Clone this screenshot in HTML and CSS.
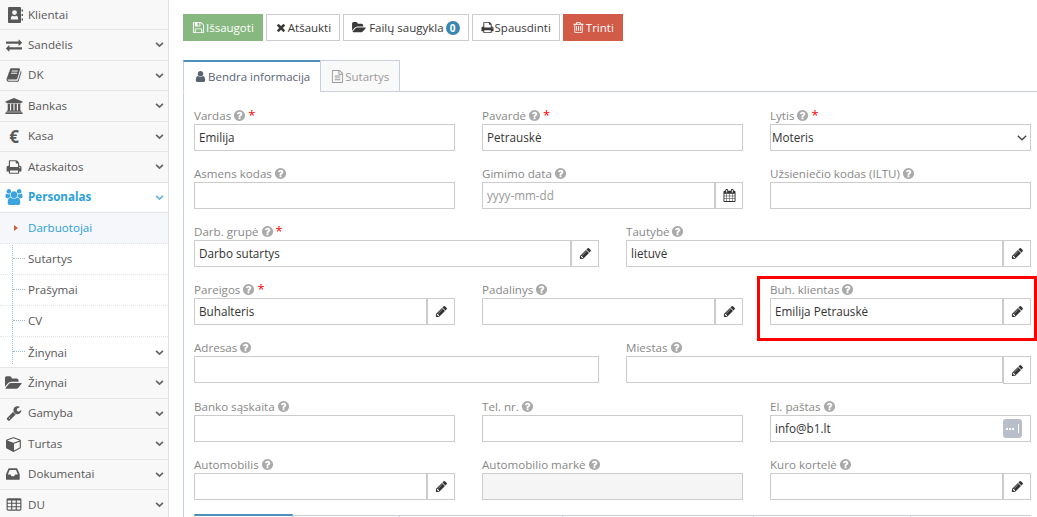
FILE: index.html
```html
<!DOCTYPE html>
<html lang="lt">
<head>
<meta charset="utf-8">
<title>Darbuotojai</title>
<link rel="stylesheet" href="styles.css">
</head>
<body>
<svg class="sprite" xmlns="http://www.w3.org/2000/svg">
<symbol id="i-pencil" viewBox="0 0 1792 1792"><path d="M491 1536l91-91-235-235-91 91v107h128v128h107zm523-928q0-22-22-22-10 0-17 7l-542 542q-7 7-7 17 0 22 22 22 10 0 17-7l542-542q7-7 7-17zm-54-192l416 416-832 832h-416v-416zm683 96q0 53-37 90l-166 166-416-416 166-165q36-38 90-38 53 0 91 38l235 234q37 39 37 91z"/></symbol>
<symbol id="i-times" viewBox="0 0 1792 1792"><path d="M1490 1322q0 40-28 68l-136 136q-28 28-68 28t-68-28l-294-294-294 294q-28 28-68 28t-68-28l-136-136q-28-28-28-68t28-68l294-294-294-294q-28-28-28-68t28-68l136-136q28-28 68-28t68 28l294 294 294-294q28-28 68-28t68 28l136 136q28 28 28 68t-28 68l-294 294 294 294q28 28 28 68z"/></symbol>
<symbol id="i-help" viewBox="0 0 1792 1792"><path d="M1024 1376v-192q0-14-9-23t-23-9h-192q-14 0-23 9t-9 23v192q0 14 9 23t23 9h192q14 0 23-9t9-23zm256-672q0-88-55.5-163t-138.5-116-170-41q-243 0-371 213-15 24 8 42l132 100q7 6 19 6 16 0 25-12 53-68 86-92 34-24 86-24 48 0 85.5 26t37.5 59q0 38-20 61t-68 45q-63 28-115.5 86.5t-52.5 125.5v36q0 14 9 23t23 9h192q14 0 23-9t9-23q0-19 21.5-49.5t54.5-49.5q32-18 49-28.5t46-35 44.5-48 28-60.5 12.5-81zm384 192q0 209-103 385.5t-279.5 279.5-385.5 103-385.5-103-279.5-279.5-103-385.5 103-385.5 279.5-279.5 385.5-103 385.5 103 279.5 279.5 103 385.5z"/></symbol>
<symbol id="i-user" viewBox="0 0 1792 1792"><path d="M1536 1399q0 109-62.5 187t-150.5 78h-854q-88 0-150.5-78t-62.5-187q0-85 8.5-160.5t31.5-152 58.5-131 94-89 134.5-34.5q131 128 313 128t313-128q76 0 134.5 34.5t94 89 58.5 131 31.5 152 8.5 160.5zm-256-887q0 159-112.5 271.5t-271.5 112.5-271.5-112.5-112.5-271.5 112.5-271.5 271.5-112.5 271.5 112.5 112.5 271.5z"/></symbol>
<symbol id="i-print" viewBox="0 0 1792 1792"><path d="M448 1536h896v-256h-896v256zm0-640h896v-384h-160q-40 0-68-28t-28-68v-160h-640v640zm1152 64q0-26-19-45t-45-19-45 19-19 45 19 45 45 19 45-19 19-45zm128 0v416q0 13-9.5 22.5t-22.5 9.5h-224v160q0 40-28 68t-68 28h-960q-40 0-68-28t-28-68v-160h-224q-13 0-22.5-9.5t-9.5-22.5v-416q0-79 56.5-135.5t135.5-56.5h64v-544q0-40 28-68t68-28h672q40 0 88 20t76 48l152 152q28 28 48 76t20 88v256h64q79 0 135.5 56.5t56.5 135.5z"/></symbol>
<symbol id="i-folder" viewBox="0 0 1920 1792"><path d="M1815 952q0 31-31 66l-336 396q-43 51-120.5 86.5t-143.5 35.5h-1088q-34 0-60.5-13t-26.5-43q0-31 31-66l336-396q43-51 120.5-86.5t143.5-35.5h1088q34 0 60.5 13t26.5 43zm-343-344v160h-832q-94 0-197 47.5t-164 119.5l-337 396-5 6q0-4-.5-12.5t-.5-12.5v-960q0-92 66-158t158-66h320q92 0 158 66t66 158v32h544q92 0 158 66t66 158z"/></symbol>
<symbol id="i-wrench" viewBox="0 0 1792 1792"><path d="M448 1472q0-26-19-45t-45-19-45 19-19 45 19 45 45 19 45-19 19-45zm644-420l-682 682q-37 37-90 37-52 0-91-37l-106-108q-38-36-38-90 0-53 38-91l681-681q39 98 114.5 173.5t173.5 114.5zm634-435q0 39-23 106-47 134-164.5 217.5t-258.5 83.5q-185 0-316.5-131.5t-131.5-316.5 131.5-316.5 316.5-131.5q58 0 121.5 16.5t107.5 46.5q16 11 16 28t-16 28l-293 169v224l193 107q5-3 79-48.5t135.5-81 70.5-35.5q15 0 23.5 10t8.5 25z"/></symbol>
<symbol id="i-exchange" viewBox="0 0 1792 1792"><path d="M1792 1184v192q0 13-9.5 22.5t-22.5 9.5h-1376v192q0 13-9.5 22.5t-22.5 9.5q-12 0-24-10l-319-320q-9-9-9-22 0-14 9-23l320-320q9-9 23-9 13 0 22.5 9.5t9.5 22.5v192h1376q13 0 22.5 9.5t9.5 22.5zm0-544q0 14-9 23l-320 320q-9 9-23 9-13 0-22.5-9.5t-9.5-22.5v-192h-1376q-13 0-22.5-9.5t-9.5-22.5v-192q0-13 9.5-22.5t22.5-9.5h1376v-192q0-14 9-23t23-9q12 0 24 10l319 319q9 9 9 23z"/></symbol>
<symbol id="i-table" viewBox="0 0 1792 1792"><path d="M576 1376v-192q0-14-9-23t-23-9h-320q-14 0-23 9t-9 23v192q0 14 9 23t23 9h320q14 0 23-9t9-23zm0-384v-192q0-14-9-23t-23-9h-320q-14 0-23 9t-9 23v192q0 14 9 23t23 9h320q14 0 23-9t9-23zm512 384v-192q0-14-9-23t-23-9h-320q-14 0-23 9t-9 23v192q0 14 9 23t23 9h320q14 0 23-9t9-23zm-512-768v-192q0-14-9-23t-23-9h-320q-14 0-23 9t-9 23v192q0 14 9 23t23 9h320q14 0 23-9t9-23zm512 384v-192q0-14-9-23t-23-9h-320q-14 0-23 9t-9 23v192q0 14 9 23t23 9h320q14 0 23-9t9-23zm512 384v-192q0-14-9-23t-23-9h-320q-14 0-23 9t-9 23v192q0 14 9 23t23 9h320q14 0 23-9t9-23zm-512-768v-192q0-14-9-23t-23-9h-320q-14 0-23 9t-9 23v192q0 14 9 23t23 9h320q14 0 23-9t9-23zm512 384v-192q0-14-9-23t-23-9h-320q-14 0-23 9t-9 23v192q0 14 9 23t23 9h320q14 0 23-9t9-23zm0-384v-192q0-14-9-23t-23-9h-320q-14 0-23 9t-9 23v192q0 14 9 23t23 9h320q14 0 23-9t9-23zm128-320v1088q0 66-47 113t-113 47h-1344q-66 0-113-47t-47-113v-1088q0-66 47-113t113-47h1344q66 0 113 47t47 113z"/></symbol>
<symbol id="i-users" viewBox="0 0 1920 1792"><path d="M593 896q-162 5-265 128h-134q-82 0-138-40.5t-56-118.5q0-353 124-353 6 0 43.5 21t97.5 42.5 119 21.5q67 0 133-23-5 37-5 66 0 139 81 256zm1071 637q0 120-73 189.5t-194 69.5h-874q-121 0-194-69.5t-73-189.5q0-53 3.5-103.5t14-109 26.5-108.5 43-97.5 62-81 85.5-53.5 111.5-20q10 0 43 21.5t73 48 107 48 135 21.5 135-21.5 107-48 73-48 43-21.5q61 0 111.5 20t85.5 53.5 62 81 43 97.5 26.5 108.5 14 109 3.5 103.5zm-1024-1277q0 106-75 181t-181 75-181-75-75-181 75-181 181-75 181 75 75 181zm704 384q0 159-112.5 271.5t-271.5 112.5-271.5-112.5-112.5-271.5 112.5-271.5 271.5-112.5 271.5 112.5 112.5 271.5zm576 225q0 78-56 118.5t-138 40.5h-134q-103-123-265-128 81-117 81-256 0-29-5-66 66 23 133 23 59 0 119-21.5t97.5-42.5 43.5-21q124 0 124 353zm-128-609q0 106-75 181t-181 75-181-75-75-181 75-181 181-75 181 75 75 181z"/></symbol>
<symbol id="i-cube" viewBox="0 0 1792 1792"><path d="M896 1629l640-349v-636l-640 233v752zm-64-864l698-254-698-254-698 254zm832-252v768q0 35-18 65t-49 47l-704 384q-28 16-61 16t-61-16l-704-384q-31-17-49-47t-18-65v-768q0-40 23-73t61-47l704-256q22-8 44-8t44 8l704 256q38 14 61 47t23 73z"/></symbol>
<symbol id="i-bank" viewBox="0 0 1920 1792"><path d="M960 0l960 384v128h-128q0 26-20.5 45t-48.5 19h-1526q-28 0-48.5-19t-20.5-45h-128v-128zm-704 640h256v768h128v-768h256v768h128v-768h256v768h128v-768h256v768h59q28 0 48.5 19t20.5 45v64h-1664v-64q0-26 20.5-45t48.5-19h59v-768zm1595 960q28 0 48.5 19t20.5 45v128h-1920v-128q0-26 20.5-45t48.5-19h1782z"/></symbol>
<symbol id="i-inbox" viewBox="0 0 1792 1792"><path d="M1023 960h316q-1-3-2.5-8.5t-2.5-7.5l-212-496h-708l-212 496q-1 3-2.5 8.5t-2.5 7.5h316l95 192h320zm513 30v482q0 26-19 45t-45 19h-1408q-26 0-45-19t-19-45v-482q0-62 25-123l238-552q10-25 36.5-42t52.5-17h832q26 0 52.5 17t36.5 42l238 552q25 61 25 123z"/></symbol>
<symbol id="i-book" viewBox="0 0 1792 1792"><path d="M1703 478q40 57 18 129l-275 906q-19 64-76.5 107.5t-122.5 43.5h-923q-77 0-148.5-53.5t-99.5-131.5q-24-67-2-127 0-4 3-27t4-37q1-8-3-21.5t-3-19.5q2-11 8-21t16.5-23.5 16.5-23.5q23-38 45-91.5t30-91.5q3-10 .5-30t-.5-28q3-11 17-28t17-23q21-36 42-92t25-90q1-9-2.5-32t.5-28q4-13 22-30.5t22-22.5q19-26 42.5-84.5t27.5-96.5q1-8-3-25.5t-2-26.5q2-8 9-18t18-23 17-21q8-12 16.5-30.5t15-35 16-36 19.5-32 26.5-23.5 36-11.5 47.5 5.5l-1 3q38-9 51-9h761q74 0 114 56t18 130l-274 906q-36 119-71.5 153.5t-128.5 34.5h-869q-27 0-38 15-11 16-1 43 24 70 144 70h923q29 0 56-15.5t35-41.5l300-987q7-22 5-57 38 15 59 43zm-1064 2q-4 13 2 22.5t20 9.5h608q13 0 25.5-9.5t16.5-22.5l21-64q4-13-2-22.5t-20-9.5h-608q-13 0-25.5 9.5t-16.5 22.5zm-83 256q-4 13 2 22.5t20 9.5h608q13 0 25.5-9.5t16.5-22.5l21-64q4-13-2-22.5t-20-9.5h-608q-13 0-25.5 9.5t-16.5 22.5z"/></symbol>
<symbol id="i-calendar" viewBox="0 0 1792 1792"><path d="M192 1664h288v-288h-288v288zm352 0h320v-288h-320v288zm-352-352h288v-320h-288v320zm352 0h320v-320h-320v320zm-352-384h288v-288h-288v288zm736 736h320v-288h-320v288zm-384-736h320v-288h-320v288zm768 736h288v-288h-288v288zm-384-352h320v-320h-320v320zm-352-864v-288q0-13-9.5-22.5t-22.5-9.5h-64q-13 0-22.5 9.5t-9.5 22.5v288q0 13 9.5 22.5t22.5 9.5h64q13 0 22.5-9.5t9.5-22.5zm736 864h288v-320h-288v320zm-384-384h320v-288h-320v288zm384 0h288v-288h-288v288zm32-480v-288q0-13-9.5-22.5t-22.5-9.5h-64q-13 0-22.5 9.5t-9.5 22.5v288q0 13 9.5 22.5t22.5 9.5h64q13 0 22.5-9.5t9.5-22.5zm384-64v1280q0 52-38 90t-90 38h-1408q-52 0-90-38t-38-90v-1280q0-52 38-90t90-38h128v-96q0-66 47-113t113-47h64q66 0 113 47t47 113v96h384v-96q0-66 47-113t113-47h64q66 0 113 47t47 113v96h128q52 0 90 38t38 90z"/></symbol>
<symbol id="i-save" viewBox="0 0 1792 1792"><path d="M512 1536h768v-384h-768v384zm896 0h128v-896q0-14-10-38.5t-20-34.5l-281-281q-10-10-34-20t-39-10v416q0 40-28 68t-68 28h-576q-40 0-68-28t-28-68v-416h-128v1280h128v-416q0-40 28-68t68-28h832q40 0 68 28t28 68v416zm-384-928v-320q0-13-9.5-22.5t-22.5-9.5h-192q-13 0-22.5 9.5t-9.5 22.5v320q0 13 9.5 22.5t22.5 9.5h192q13 0 22.5-9.5t9.5-22.5zm640 32v928q0 40-28 68t-68 28h-1344q-40 0-68-28t-28-68v-1344q0-40 28-68t68-28h928q40 0 88 20t76 48l280 280q28 28 48 76t20 88z"/></symbol>
<symbol id="i-trash" viewBox="0 0 1792 1792"><path d="M704 736v576q0 14-9 23t-23 9h-64q-14 0-23-9t-9-23v-576q0-14 9-23t23-9h64q14 0 23 9t9 23zm256 0v576q0 14-9 23t-23 9h-64q-14 0-23-9t-9-23v-576q0-14 9-23t23-9h64q14 0 23 9t9 23zm256 0v576q0 14-9 23t-23 9h-64q-14 0-23-9t-9-23v-576q0-14 9-23t23-9h64q14 0 23 9t9 23zm128 724v-948h-896v948q0 22 7 40.5t14.5 27 10.5 8.5h832q3 0 10.5-8.5t14.5-27 7-40.5zm-672-1076h448l-48-117q-7-9-17-11h-317q-10 2-17 11zm928 32v64q0 14-9 23t-23 9h-96v948q0 83-47 143.5t-113 60.5h-832q-66 0-113-58.5t-47-141.5v-952h-96q-14 0-23-9t-9-23v-64q0-14 9-23t23-9h309l70-167q15-37 54-63t79-26h320q40 0 79 26t54 63l70 167h309q14 0 23 9t9 23z"/></symbol>
<symbol id="i-file" viewBox="0 0 1792 1792"><path d="M1596 380q28 28 48 76t20 88v1152q0 40-28 68t-68 28h-1344q-40 0-68-28t-28-68v-1600q0-40 28-68t68-28h896q40 0 88 20t76 48zm-444-244v376h376q-10-29-22-41l-313-313q-12-12-41-22zm384 1528v-1024h-416q-40 0-68-28t-28-68v-416h-768v1536h1280zm-1024-864q0-14 9-23t23-9h704q14 0 23 9t9 23v64q0 14-9 23t-23 9h-704q-14 0-23-9t-9-23v-64zm736 224q14 0 23 9t9 23v64q0 14-9 23t-23 9h-704q-14 0-23-9t-9-23v-64q0-14 9-23t23-9h704zm0 256q14 0 23 9t9 23v64q0 14-9 23t-23 9h-704q-14 0-23-9t-9-23v-64q0-14 9-23t23-9h704z"/></symbol>
<symbol id="i-contact" viewBox="0 0 16 16"><path fill-rule="evenodd" d="M2 0h11a1 1 0 0 1 1 1v14a1 1 0 0 1-1 1H2a1 1 0 0 1-1-1V1a1 1 0 0 1 1-1zm5.500 3.200a2.400 2.400 0 1 0 0 4.800 2.400 2.400 0 0 0 0-4.800zM3.800 12.600h7.400c0-2.400-.8-3.900-2-3.900-.5.4-1 .6-1.700.6s-1.200-.2-1.700-.6c-1.200 0-2 1.500-2 3.900z"/><path d="M14.600 2.500H16v2h-1.400zM14.600 7H16v2h-1.400zM14.600 11.500H16v2h-1.400z"/></symbol>
<symbol id="i-angle" viewBox="0 0 10 10"><path d="M1.200 3.100 5 6.700l3.800-3.600" fill="none" stroke="currentColor" stroke-width="2"/></symbol>
<symbol id="i-select" viewBox="0 0 10 6"><path d="M.8.800 5 4.800 9.200.8" fill="none" stroke="currentColor" stroke-width="1.300"/></symbol>
</svg>

<div class="layout">
<nav class="sidebar">
  <a class="nav-item nav-first"><span class="nav-ico"><svg class="ico-contact"><use href="#i-contact"/></svg></span><span class="nav-text">Klientai</span></a>
  <a class="nav-item"><span class="nav-ico"><svg class="ico-18"><use href="#i-exchange"/></svg></span><span class="nav-text">Sandėlis</span><svg class="caret"><use href="#i-angle"/></svg></a>
  <a class="nav-item"><span class="nav-ico"><svg class="ico-16"><use href="#i-book"/></svg></span><span class="nav-text">DK</span><svg class="caret"><use href="#i-angle"/></svg></a>
  <a class="nav-item"><span class="nav-ico"><svg class="ico-18"><use href="#i-bank"/></svg></span><span class="nav-text">Bankas</span><svg class="caret"><use href="#i-angle"/></svg></a>
  <a class="nav-item"><span class="nav-ico nav-euro">€</span><span class="nav-text">Kasa</span><svg class="caret"><use href="#i-angle"/></svg></a>
  <a class="nav-item"><span class="nav-ico"><svg class="ico-16"><use href="#i-print"/></svg></span><span class="nav-text">Ataskaitos</span><svg class="caret"><use href="#i-angle"/></svg></a>
  <a class="nav-item nav-open"><span class="nav-ico"><svg class="ico-18"><use href="#i-users"/></svg></span><span class="nav-text">Personalas</span><svg class="caret"><use href="#i-angle"/></svg></a>
  <div class="submenu">
    <a class="sub-item sub-active"><span class="nav-text">Darbuotojai</span></a>
    <a class="sub-item"><span class="nav-text">Sutartys</span></a>
    <a class="sub-item"><span class="nav-text">Prašymai</span></a>
    <a class="sub-item"><span class="nav-text">CV</span></a>
    <a class="sub-item sub-last"><span class="nav-text">Žinynai</span><svg class="caret"><use href="#i-angle"/></svg></a>
  </div>
  <a class="nav-item"><span class="nav-ico"><svg class="ico-18"><use href="#i-folder"/></svg></span><span class="nav-text">Žinynai</span><svg class="caret"><use href="#i-angle"/></svg></a>
  <a class="nav-item"><span class="nav-ico"><svg class="ico-16"><use href="#i-wrench"/></svg></span><span class="nav-text">Gamyba</span><svg class="caret"><use href="#i-angle"/></svg></a>
  <a class="nav-item"><span class="nav-ico"><svg class="ico-16"><use href="#i-cube"/></svg></span><span class="nav-text">Turtas</span><svg class="caret"><use href="#i-angle"/></svg></a>
  <a class="nav-item"><span class="nav-ico"><svg class="ico-16"><use href="#i-inbox"/></svg></span><span class="nav-text">Dokumentai</span><svg class="caret"><use href="#i-angle"/></svg></a>
  <a class="nav-item"><span class="nav-ico"><svg class="ico-16"><use href="#i-table"/></svg></span><span class="nav-text">DU</span><svg class="caret"><use href="#i-angle"/></svg></a>
</nav>

<main class="main">
  <div class="toolbar">
    <button class="btn btn-green"><svg class="btn-ico"><use href="#i-save"/></svg>Išsaugoti</button>
    <button class="btn"><svg class="btn-ico btn-ico-s"><use href="#i-times"/></svg>Atšaukti</button>
    <button class="btn"><svg class="btn-ico btn-ico-w"><use href="#i-folder"/></svg>Failų saugykla<span class="badge">0</span></button>
    <button class="btn"><svg class="btn-ico"><use href="#i-print"/></svg>Spausdinti</button>
    <button class="btn btn-red"><svg class="btn-ico"><use href="#i-trash"/></svg>Trinti</button>
  </div>

  <div class="tabs">
    <div class="tab tab-active"><svg class="tab-ico"><use href="#i-user"/></svg>Bendra informacija</div>
    <div class="tab"><svg class="tab-ico"><use href="#i-file"/></svg>Sutartys</div>
  </div>

  <div class="pane">
    <div class="form">
      <div class="field span-4">
        <label class="lbl">Vardas<svg class="help"><use href="#i-help"/></svg><span class="req">*</span></label>
        <div class="group"><input class="inp" value="Emilija"></div>
      </div>
      <div class="field span-4">
        <label class="lbl">Pavardė<svg class="help"><use href="#i-help"/></svg><span class="req">*</span></label>
        <div class="group"><input class="inp" value="Petrauskė"></div>
      </div>
      <div class="field span-4">
        <label class="lbl">Lytis<svg class="help"><use href="#i-help"/></svg><span class="req">*</span></label>
        <div class="group"><select class="inp inp-select"><option>Moteris</option></select><svg class="select-arrow"><use href="#i-select"/></svg></div>
      </div>

      <div class="field span-4">
        <label class="lbl">Asmens kodas<svg class="help"><use href="#i-help"/></svg></label>
        <div class="group"><input class="inp"></div>
      </div>
      <div class="field span-4">
        <label class="lbl">Gimimo data<svg class="help"><use href="#i-help"/></svg></label>
        <div class="group"><input class="inp" placeholder="yyyy-mm-dd"><span class="addon"><svg class="addon-ico"><use href="#i-calendar"/></svg></span></div>
      </div>
      <div class="field span-4">
        <label class="lbl">Užsieniečio kodas (ILTU)<svg class="help"><use href="#i-help"/></svg></label>
        <div class="group"><input class="inp"></div>
      </div>

      <div class="field span-6">
        <label class="lbl">Darb. grupė<svg class="help"><use href="#i-help"/></svg><span class="req">*</span></label>
        <div class="group"><input class="inp" value="Darbo sutartys"><span class="addon"><svg class="addon-ico"><use href="#i-pencil"/></svg></span></div>
      </div>
      <div class="field span-6">
        <label class="lbl">Tautybė<svg class="help"><use href="#i-help"/></svg></label>
        <div class="group"><input class="inp" value="lietuvė"><span class="addon"><svg class="addon-ico"><use href="#i-pencil"/></svg></span></div>
      </div>

      <div class="field span-4">
        <label class="lbl">Pareigos<svg class="help"><use href="#i-help"/></svg><span class="req">*</span></label>
        <div class="group"><input class="inp" value="Buhalteris"><span class="addon"><svg class="addon-ico"><use href="#i-pencil"/></svg></span></div>
      </div>
      <div class="field span-4">
        <label class="lbl">Padalinys<svg class="help"><use href="#i-help"/></svg></label>
        <div class="group"><input class="inp"><span class="addon"><svg class="addon-ico"><use href="#i-pencil"/></svg></span></div>
      </div>
      <div class="field span-4 field-marked">
        <label class="lbl">Buh. klientas<svg class="help"><use href="#i-help"/></svg></label>
        <div class="group"><input class="inp" value="Emilija Petrauskė"><span class="addon"><svg class="addon-ico"><use href="#i-pencil"/></svg></span></div>
      </div>

      <div class="field span-6">
        <label class="lbl">Adresas<svg class="help"><use href="#i-help"/></svg></label>
        <div class="group"><input class="inp"></div>
      </div>
      <div class="field span-6">
        <label class="lbl">Miestas<svg class="help"><use href="#i-help"/></svg></label>
        <div class="group"><input class="inp"><span class="addon addon-tall"><svg class="addon-ico"><use href="#i-pencil"/></svg></span></div>
      </div>

      <div class="field span-4">
        <label class="lbl">Banko sąskaita<svg class="help"><use href="#i-help"/></svg></label>
        <div class="group"><input class="inp"></div>
      </div>
      <div class="field span-4">
        <label class="lbl">Tel. nr.<svg class="help"><use href="#i-help"/></svg></label>
        <div class="group"><input class="inp"></div>
      </div>
      <div class="field span-4">
        <label class="lbl">El. paštas<svg class="help"><use href="#i-help"/></svg></label>
        <div class="group"><input class="inp" value="info@b1.lt"><span class="autofill"><i></i><i></i><i></i></span></div>
      </div>

      <div class="field span-4">
        <label class="lbl">Automobilis<svg class="help"><use href="#i-help"/></svg></label>
        <div class="group"><input class="inp"><span class="addon"><svg class="addon-ico"><use href="#i-pencil"/></svg></span></div>
      </div>
      <div class="field span-4">
        <label class="lbl">Automobilio markė<svg class="help"><use href="#i-help"/></svg></label>
        <div class="group"><input class="inp inp-disabled" disabled></div>
      </div>
      <div class="field span-4">
        <label class="lbl">Kuro kortelė<svg class="help"><use href="#i-help"/></svg></label>
        <div class="group"><input class="inp"><span class="addon"><svg class="addon-ico"><use href="#i-pencil"/></svg></span></div>
      </div>
    </div>

    <div class="subtabs">
      <div class="subtab subtab-active"></div>
      <div class="subtab subtab-b"></div>
      <div class="subtab subtab-c"></div>
      <div class="subtab subtab-d"></div>
      <div class="subtab subtab-e"></div>
      <div class="subtab subtab-f"></div>
    </div>
  </div>
</main>
</div>
</body>
</html>
```

FILE: styles.css
```css
* { box-sizing: border-box; }
html, body { margin: 0; height: 517px; overflow: hidden; background: #fff; }
body { font-family: "Open Sans", sans-serif; font-size: 12px; color: #393939; }
.sprite { display: none; }
.layout { display: flex; height: 517px; }

/* sidebar */
.sidebar { flex: 0 0 169px; height: 517px; overflow: hidden; background: #f8f8f8; border-right: 1px solid #e0e0e0; }
.nav-item { display: flex; align-items: center; height: 30.5px; border-bottom: 1px solid #e5e5e5; color: #585858; font-size: 11.600px; }
.nav-first { height: 30px; }
.nav-ico { flex: 0 0 28px; display: flex; align-items: center; justify-content: center; fill: #585858; }
.ico-16 { width: 16px; height: 16px; }
.ico-18 { width: 18px; height: 16px; }
.ico-contact { width: 16px; height: 16px; margin-left: 1px; }
.nav-euro { font-size: 17px; font-weight: 700; line-height: 1; color: #585858; }
.nav-text { flex: 1; padding-bottom: 1px; }
.caret { flex: 0 0 9px; width: 9px; height: 9px; margin-right: 4px; color: #666; }
.nav-open { background: #fff; color: #2b9fdc; font-weight: 700; }
.nav-open .nav-ico { fill: #3ba4e0; }
.nav-open .caret { color: #6fb3e0; }
.submenu { position: relative; background: #fff; border-bottom: 1px solid #e5e5e5; height: 155px; }
.submenu::before { content: ""; position: absolute; left: 12px; top: 0; bottom: 3px; border-left: 1px dotted #9dbdd6; }
.sub-item { position: relative; display: flex; align-items: center; height: 31px; padding-left: 28px; border-bottom: 1px dotted #e4e4e4; color: #585858; font-size: 11.600px; }
.sub-item::before { content: ""; position: absolute; left: 13px; top: 14px; width: 12px; border-top: 1px dotted #9dbdd6; }
.sub-last { border-bottom: 0; }
.sub-active { background: #f5f7fa; color: #2b9fdc; }
.sub-active::before { left: 14px; top: 12px; width: 0; border: 0; border-left: 4px solid #c86139; border-top: 3.500px solid transparent; border-bottom: 3.500px solid transparent; }

/* main */
.main { flex: 1; min-width: 0; padding: 14px 0 0 14px; }
.toolbar { display: flex; gap: 3px; }
.btn { display: inline-flex; align-items: center; height: 27px; padding: 0 8px; background: #fff; border: 1px solid #ccc; color: #393939; font: 11.500px "Open Sans", sans-serif; white-space: nowrap; }
.btn-green { background: #87b87f; border-color: #87b87f; color: #fff; fill: #fff; }
.btn-red { background: #d15b47; border-color: #d15b47; color: #fff; fill: #fff; }
.btn-ico { width: 13px; height: 13px; margin-right: 1px; fill: currentColor; }
.btn-ico-s { width: 12px; }
.btn-ico-w { width: 15px; margin-right: 2px; }
.badge { display: inline-block; min-width: 14px; height: 14px; margin-left: 2px; border-radius: 7px; background: #3a87ad; color: #fff; font-size: 10px; font-weight: 700; line-height: 14px; text-align: center; }

.tabs { display: flex; margin-top: 19px; height: 32px; position: relative; z-index: 1; }
.tab { display: flex; align-items: center; height: 32px; padding: 0 10px; margin-right: -1px; border: 1px solid #c5d0dc; background: #f9f9f9; color: #999; font-size: 11.500px; white-space: nowrap; }
.tab-active { background: #fff; color: #576373; border-top: 2px solid #4c8fbd; border-bottom-color: #fff; }
.tab-ico { width: 13px; height: 13px; margin-right: 1px; fill: currentColor; }

.pane { border-left: 1px solid #c5d0dc; border-top: 1px solid #c5d0dc; margin-top: -1px; padding: 14px 6px 0 10px; height: 426px; }
.form { display: grid; grid-template-columns: repeat(12, 45px); column-gap: 27px; row-gap: 13px; }
.span-4 { grid-column: span 4; }
.span-6 { grid-column: span 6; }
.field { position: relative; min-width: 0; }
.lbl { display: flex; align-items: center; height: 18px; color: #888; font-size: 11.600px; white-space: nowrap; }
.help { width: 13px; height: 13px; margin-left: 2px; fill: #aaa; }
.req { margin-left: 2px; color: #f00; font-size: 13px; line-height: 1; }
.group { position: relative; display: flex; align-items: flex-start; }
.inp { flex: 1; min-width: 0; width: 100%; height: 27px; padding: 0 4px 2px; background: #fff; border: 1px solid #ccc; border-radius: 0; color: #333; font: 11.700px "Open Sans", sans-serif; outline: 0; }
.inp::placeholder { color: #999; opacity: 1; }
.inp-disabled { background: #f5f5f5; }
.inp-select { appearance: none; padding: 0 1px 2px; }
.select-arrow { position: absolute; right: 4px; top: 11px; width: 10px; height: 6px; color: #444; pointer-events: none; }
.addon { flex: 0 0 28px; display: flex; align-items: center; justify-content: center; height: 27px; background: #fff; border: 1px solid #ccc; }
.addon-tall { height: 28px; }
.addon-ico { width: 13px; height: 13px; fill: #333; }
.autofill { position: absolute; right: 9px; top: 4px; display: flex; align-items: center; gap: 1px; width: 19px; height: 19px; padding-left: 3px; border-radius: 3px; background: #b9bfca; }
.autofill i { width: 2px; height: 2px; background: #fff; }
.autofill::after { content: ""; width: 1px; height: 9px; margin-left: 3px; background: #fff; }
.field-marked::after { content: ""; position: absolute; left: -13px; right: -6px; top: -4px; bottom: -16px; border: 3px solid #f00; pointer-events: none; }

.subtabs { display: flex; height: 4px; margin-top: 14px; }
.subtab { height: 4px; border-top: 1px solid #c5d0dc; border-left: 1px solid #c5d0dc; margin-top: 1px; }
.subtab-active { flex: 0 0 99px; border: 1px solid #c5d0dc; border-bottom: 0; border-top: 2px solid #4c8fbd; margin-top: 0; }
.subtab-b { flex: 0 0 106px; }
.subtab-c { flex: 0 0 163px; }
.subtab-d { flex: 0 0 191px; }
.subtab-e { flex: 0 0 157px; }
.subtab-f { flex: 1; }
```
